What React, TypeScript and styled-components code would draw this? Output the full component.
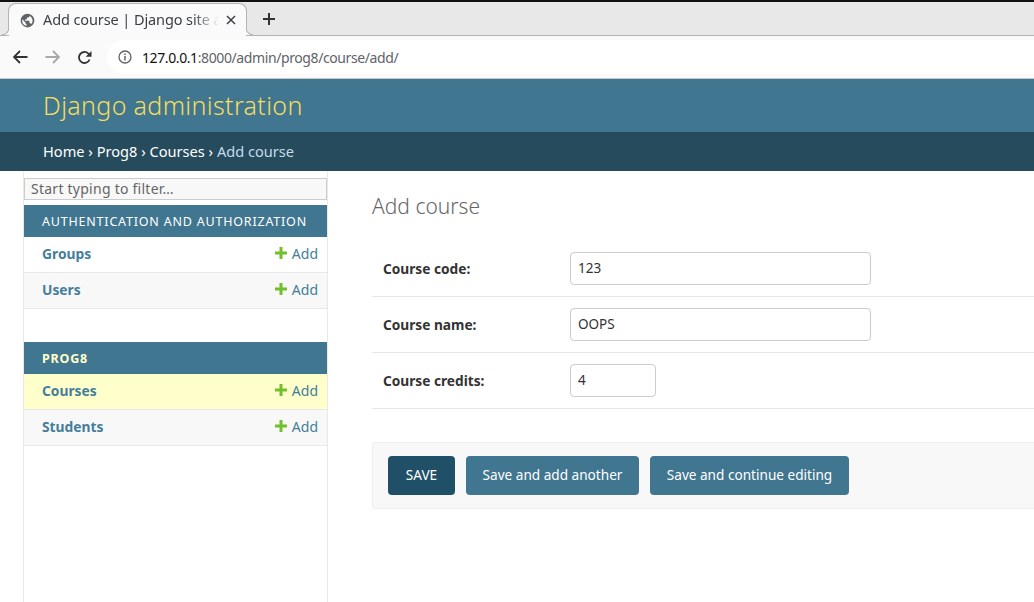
import styled, { createGlobalStyle } from "styled-components";

const GlobalStyle = createGlobalStyle`
  html, body {
    margin: 0;
    padding: 0;
    background: #fff;
    overflow: hidden;
  }
  * {
    box-sizing: border-box;
  }
  #root {
    width: 1034px;
    height: 602px;
    overflow: hidden;
    font-family: "Noto Sans", "Open Sans", sans-serif;
  }
`;

const TabStrip = styled.div`
  height: 36px;
  background: #e8e8e8;
  border-top: 2px solid #111;
  display: flex;
  align-items: flex-end;
  padding-left: 8px;
  border-bottom: 1px solid #b4b4b4;
`;

const Tab = styled.div`
  width: 239px;
  height: 33px;
  margin-bottom: -1px;
  background: #fafafa;
  border: 1px solid #b4b4b4;
  border-bottom: none;
  border-radius: 8px 8px 0 0;
  display: flex;
  align-items: center;
  padding: 0 0 0 11px;
  position: relative;
  font-size: 14.5px;
  color: #3c4043;

  &::before,
  &::after {
    content: "";
    position: absolute;
    bottom: 1px;
    width: 7px;
    height: 7px;
  }
  &::before {
    right: 100%;
    background: radial-gradient(circle at 0 0, #e8e8e8 6px, #b4b4b4 6.500px, #b4b4b4 7px, #fafafa 7.500px);
  }
  &::after {
    left: 100%;
    background: radial-gradient(circle at 100% 0, #e8e8e8 6px, #b4b4b4 6.500px, #b4b4b4 7px, #fafafa 7.500px);
  }
`;

const TabTitle = styled.span`
  margin: 0 5px 2px 8px;
  width: 178px;
  overflow: hidden;
  white-space: nowrap;
  letter-spacing: -0.1px;
  -webkit-mask-image: linear-gradient(to right, #000 150px, transparent 176px);
  mask-image: linear-gradient(to right, #000 150px, transparent 176px);
`;

const NewTab = styled.div`
  margin: 0 0 4px 16px;
  display: flex;
  align-items: center;
  height: 24px;
`;

const Toolbar = styled.div`
  height: 43px;
  background: #fafafa;
  border-bottom: 1px solid #c8c8c8;
  display: flex;
  align-items: center;
  padding-left: 13px;
`;

const NavIcon = styled.div`
  width: 17px;
  margin-right: 15px;
  display: flex;
  align-items: center;
`;

const AddressBar = styled.div`
  flex: 1;
  height: 34px;
  margin-left: -2px;
  background: #fff;
  border-radius: 17px 0 0 17px;
  display: flex;
  align-items: center;
  padding-left: 11px;
  font-size: 14px;
  letter-spacing: -0.4px;
  color: #5f6368;
`;

const Host = styled.span`
  margin-left: 10px;
  color: #111;
`;

const Header = styled.header`
  height: 53px;
  background: #417690;
  padding: 10px 0 0 43px;
  font-size: 25px;
  line-height: 33px;
  font-weight: 300;
  color: #f5dd5d;
  letter-spacing: 0.35px;
`;

const Breadcrumbs = styled.nav`
  height: 39px;
  background: #264b5d;
  padding: 0 0 2px 43px;
  display: flex;
  align-items: center;
  font-size: 14.6px;
  color: #fff;
  white-space: pre;
`;

const Crumb = styled.span`
  color: #c4dce8;
`;

const Main = styled.div`
  display: flex;
  height: 431px;
`;

const Sidebar = styled.aside`
  width: 305px;
  margin-left: 23px;
  border-left: 1px solid #e8e8e8;
  border-right: 1px solid #e8e8e8;
  padding-top: 7px;
`;

const FilterInput = styled.div`
  height: 22px;
  border: 1px solid #ccc;
  background: #f8f8f8;
  padding-left: 6px;
  font-size: 14px;
  letter-spacing: 0.25px;
  line-height: 19px;
  color: #666;
`;

const ModuleCaption = styled.div<{ $current?: boolean }>`
  height: 32px;
  margin-top: ${(p) => (p.$current ? "33px" : "5px")};
  background: #417690;
  padding-left: 18px;
  display: flex;
  align-items: center;
  font-size: 12.5px;
  letter-spacing: 0.8px;
  font-weight: ${(p) => (p.$current ? 700 : 400)};
  color: ${(p) => (p.$current ? "#ffc" : "#fff")};
`;

const ModelRow = styled.div<{ $tone: "white" | "grey" | "yellow" }>`
  height: 36px;
  padding: 0 9px 3px 18px;
  display: flex;
  align-items: center;
  justify-content: space-between;
  border-bottom: 1px solid #e8e8e8;
  font-size: 13.8px;
  color: #447e9b;
  background: ${(p) =>
    p.$tone === "yellow" ? "#ffc" : p.$tone === "grey" ? "#f8f8f8" : "#fff"};
`;

const ModelName = styled.span`
  font-weight: 700;
`;

const AddLink = styled.span`
  display: flex;
  align-items: center;
  gap: 5px;
  font-size: 14px;
`;

const Content = styled.main`
  flex: 1;
  padding: 20px 0 0 44px;
`;

const Title = styled.h1`
  margin: 0 0 20px;
  font-size: 21px;
  line-height: 30px;
  font-weight: 300;
  color: #666;
`;

const FormRow = styled.div`
  height: 56px;
  border-bottom: 1px solid #e8e8e8;
  padding-left: 11px;
  display: flex;
  align-items: center;
`;

const FieldLabel = styled.label`
  width: 187px;
  font-size: 13.7px;
  font-weight: 700;
  color: #333;
`;

const TextField = styled.div<{ $width: number }>`
  width: ${(p) => p.$width}px;
  height: 33px;
  border: 1px solid #ccc;
  border-radius: 4px;
  padding-left: 7px;
  font-size: 13.5px;
  line-height: 31px;
  color: #333;
`;

const SubmitRow = styled.div`
  height: 67px;
  margin-top: 33px;
  background: #f8f8f8;
  border: 1px solid #eee;
  border-right: none;
  border-radius: 4px 0 0 4px;
  padding-left: 15px;
  display: flex;
  align-items: center;
  gap: 11px;
`;

const SubmitButton = styled.button<{ $width: number; $primary?: boolean }>`
  width: ${(p) => p.$width}px;
  height: 39px;
  padding: 0 0 2px;
  border: none;
  border-radius: 4px;
  background: ${(p) => (p.$primary ? "#205067" : "#417690")};
  color: #fff;
  font-family: inherit;
  font-size: 13.6px;
`;

const Globe = () => (
  <svg width="15" height="15" viewBox="0 0 24 24" fill="#5f6368">
    <path d="M12 1a11 11 0 1 0 0 22 11 11 0 0 0 0-22zM3.500 12c0-.7.1-1.300.2-1.900L9 15.400v1.100c0 1.100.9 2 2 2v1.900A8.500 8.500 0 0 1 3.500 12zm14.600 5.500c-.3-.8-1-1.300-1.900-1.300h-1v-3c0-.6-.4-1-1-1H8v-2h2c.6 0 1-.4 1-1v-2h2c1.100 0 2-.9 2-2V4.300a8.500 8.500 0 0 1 3.100 13.200z" />
  </svg>
);

const Close = () => (
  <svg width="10" height="10" viewBox="0 0 10 10" stroke="#3c4043" strokeWidth="1.5">
    <path d="M1 1l8 8M9 1l-8 8" />
  </svg>
);

const Plus = () => (
  <svg width="12" height="12" viewBox="0 0 12 12" stroke="#333" strokeWidth="2">
    <path d="M6 0v12M0 6h12" />
  </svg>
);

const Arrow = ({ color, flip }: { color: string; flip?: boolean }) => (
  <svg width="15" height="14" viewBox="0 0 15 14" fill="none" stroke={color} strokeWidth="1.8">
    <path d={flip ? "M0.500 7h13M8 1l6 6-6 6" : "M14.500 7h-13M7 1L1 7l6 6"} />
  </svg>
);

const Reload = () => (
  <svg width="15" height="15" viewBox="0 0 15 15" fill="none">
    <path d="M12.600 9.500A5.500 5.500 0 1 1 11.400 3.600L13 5.200" stroke="#333" strokeWidth="1.800" />
    <path d="M14.500 1v5.800H8.700z" fill="#333" />
  </svg>
);

const Info = () => (
  <svg width="14" height="14" viewBox="0 0 14 14" fill="none" stroke="#5f6368">
    <circle cx="7" cy="7" r="6" strokeWidth="1.300" />
    <path d="M7 6v4.500M7 3.500v1.500" strokeWidth="1.500" />
  </svg>
);

const GreenPlus = () => (
  <svg width="12" height="12" viewBox="0 0 12 12" fill="#70bf2b">
    <path d="M4.500 0h3v4.500H12v3H7.500V12h-3V7.500H0v-3h4.500z" />
  </svg>
);

const App = () => (
  <>
    <GlobalStyle />
    <TabStrip>
      <Tab>
        <Globe />
        <TabTitle>Add course | Django site admin</TabTitle>
        <Close />
      </Tab>
      <NewTab>
        <Plus />
      </NewTab>
    </TabStrip>
    <Toolbar>
      <NavIcon>
        <Arrow color="#333" />
      </NavIcon>
      <NavIcon>
        <Arrow color="#a8a8a8" flip />
      </NavIcon>
      <NavIcon>
        <Reload />
      </NavIcon>
      <AddressBar>
        <Info />
        <Host>127.0.0.1</Host>
        :8000/admin/prog8/course/add/
      </AddressBar>
    </Toolbar>
    <Header>Django administration</Header>
    <Breadcrumbs>
      Home › Prog8 › Courses › <Crumb>Add course</Crumb>
    </Breadcrumbs>
    <Main>
      <Sidebar>
        <FilterInput>Start typing to filter…</FilterInput>
        <ModuleCaption>AUTHENTICATION AND AUTHORIZATION</ModuleCaption>
        <ModelRow $tone="white">
          <ModelName>Groups</ModelName>
          <AddLink>
            <GreenPlus />
            Add
          </AddLink>
        </ModelRow>
        <ModelRow $tone="grey">
          <ModelName>Users</ModelName>
          <AddLink>
            <GreenPlus />
            Add
          </AddLink>
        </ModelRow>
        <ModuleCaption $current>PROG8</ModuleCaption>
        <ModelRow $tone="yellow">
          <ModelName>Courses</ModelName>
          <AddLink>
            <GreenPlus />
            Add
          </AddLink>
        </ModelRow>
        <ModelRow $tone="grey">
          <ModelName>Students</ModelName>
          <AddLink>
            <GreenPlus />
            Add
          </AddLink>
        </ModelRow>
      </Sidebar>
      <Content>
        <Title>Add course</Title>
        <FormRow>
          <FieldLabel>Course code:</FieldLabel>
          <TextField $width={301}>123</TextField>
        </FormRow>
        <FormRow>
          <FieldLabel>Course name:</FieldLabel>
          <TextField $width={301}>OOPS</TextField>
        </FormRow>
        <FormRow>
          <FieldLabel>Course credits:</FieldLabel>
          <TextField $width={86}>4</TextField>
        </FormRow>
        <SubmitRow>
          <SubmitButton $primary $width={67}>
            SAVE
          </SubmitButton>
          <SubmitButton $width={173}>Save and add another</SubmitButton>
          <SubmitButton $width={199}>Save and continue editing</SubmitButton>
        </SubmitRow>
      </Content>
    </Main>
  </>
);

export default App;
